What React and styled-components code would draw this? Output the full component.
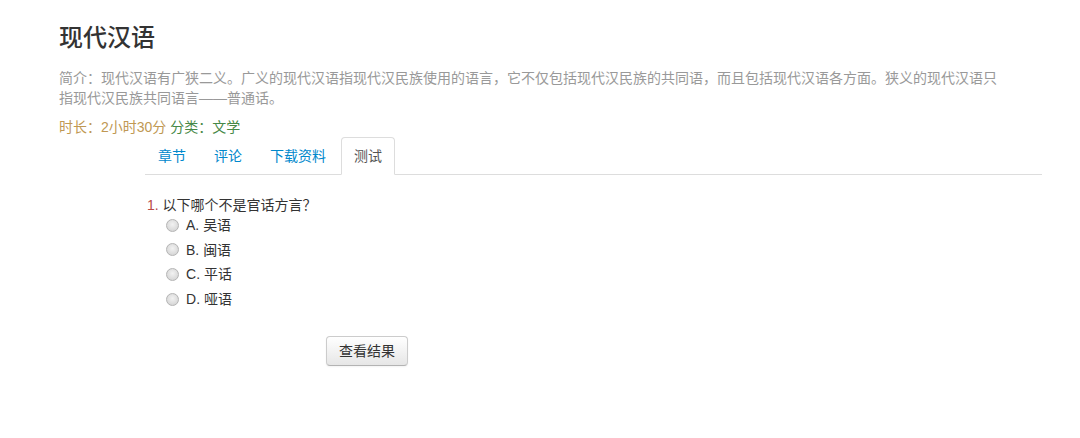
import React, { useState } from 'react';
import styled, { createGlobalStyle } from 'styled-components';

const GlobalStyle = createGlobalStyle`
  html, body {
    margin: 0;
    padding: 0;
    background: #fff;
  }
  body {
    font-family: "Liberation Sans", "Noto Sans CJK SC", sans-serif;
    font-size: 14px;
    line-height: 20px;
    color: #333;
  }
`;

const tabs = ['章节', '评论', '下载资料', '测试'];
const options = [
  { key: 'A', text: '吴语' },
  { key: 'B', text: '闽语' },
  { key: 'C', text: '平话' },
  { key: 'D', text: '哑语' },
];

function App() {
  const [activeTab, setActiveTab] = useState(3);
  const [answer, setAnswer] = useState('');

  return (
    <Page>
      <GlobalStyle />
      <Title>现代汉语</Title>
      <Intro>
        简介：现代汉语有广狭二义。广义的现代汉语指现代汉民族使用的语言，它不仅包括现代汉民族的共同语，而且包括现代汉语各方面。狭义的现代汉语只指现代汉民族共同语言——普通话。
      </Intro>
      <Meta>
        <Duration>时长：2小时30分</Duration> <Category>分类：文学</Category>
      </Meta>

      <Content>
        <Tabs>
          {tabs.map((t, i) => (
            <Tab key={t} active={i === activeTab} onClick={() => setActiveTab(i)}>
              {t}
            </Tab>
          ))}
        </Tabs>

        <Question>
          <QNum>1.</QNum> 以下哪个不是官话方言？
        </Question>
        <OptionList>
          {options.map(o => (
            <Option key={o.key}>
              <Radio
                type="radio"
                name="q1"
                checked={answer === o.key}
                onChange={() => setAnswer(o.key)}
              />
              {o.key}. {o.text}
            </Option>
          ))}
        </OptionList>

        <ButtonRow>
          <Button type="button">查看结果</Button>
        </ButtonRow>
      </Content>
    </Page>
  );
}

export default App;

const Page = styled.div`
  padding: 16px 38px 40px 59px;
`;

const Title = styled.h1`
  margin: 0 0 12px;
  font-family: "Noto Sans CJK SC", serif;
  font-size: 24px;
  line-height: 40px;
  font-weight: 500;
  color: #333;
`;

const Intro = styled.p`
  margin: 0 0 9px;
  max-width: 945px;
  color: #999;
`;

const Meta = styled.div`
  height: 20px;
`;

const Duration = styled.span`
  color: #c09853;
`;

const Category = styled.span`
  color: #468847;
`;

const Content = styled.div`
  margin-left: 86px;
`;

const Tabs = styled.ul`
  display: flex;
  margin: 0;
  padding: 0;
  list-style: none;
  border-bottom: 1px solid #ddd;
`;

const Tab = styled.li`
  margin: 0 2px -1px 0;
  padding: 8px 12px;
  line-height: 20px;
  border: 1px solid ${p => (p.active ? '#ddd' : 'transparent')};
  border-bottom-color: transparent;
  border-radius: 4px 4px 0 0;
  background: ${p => (p.active ? '#fff' : 'transparent')};
  color: ${p => (p.active ? '#555' : '#0088cc')};
  cursor: pointer;
`;

const Question = styled.div`
  margin-top: 20px;
  padding-left: 2px;
  color: #333;
`;

const QNum = styled.span`
  color: #b94a48;
`;

const OptionList = styled.div`
  padding-left: 21px;
`;

const Option = styled.label`
  display: flex;
  align-items: center;
  margin-top: 4.7px;
  color: #333;
  &:first-child {
    margin-top: 0;
  }
`;

const Radio = styled.input`
  appearance: none;
  width: 13px;
  height: 13px;
  margin: 0 7px 0 0;
  border: 1px solid #b4b4b4;
  border-radius: 50%;
  background: radial-gradient(circle at 50% 40%, #f2f2f2 0%, #d9d9d9 70%, #cfcfcf 100%);
  box-sizing: border-box;
  &:checked {
    background: radial-gradient(circle, #333 0 3px, #eee 3.5px);
  }
`;

const ButtonRow = styled.div`
  margin-top: 27px;
  padding-left: 181px;
`;

const Button = styled.button`
  padding: 4px 12px;
  font-family: "Liberation Sans", "Noto Sans CJK SC", sans-serif;
  font-size: 14px;
  line-height: 20px;
  color: #333;
  background: linear-gradient(#ffffff, #e6e6e6);
  border: 1px solid #ccc;
  border-bottom-color: #b3b3b3;
  border-radius: 4px;
  box-shadow: inset 0 1px 0 rgba(255, 255, 255, 0.2), 0 1px 2px rgba(0, 0, 0, 0.05);
  cursor: pointer;
`;
